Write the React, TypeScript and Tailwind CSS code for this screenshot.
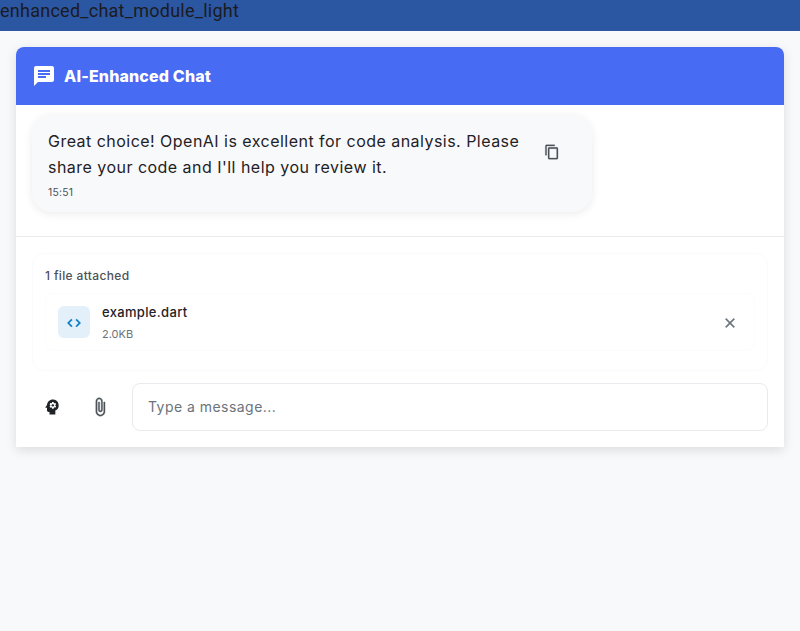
import { MdAttachFile, MdChat, MdClose, MdCode, MdContentCopy, MdPsychology } from "react-icons/md";

function Message() {
  return (
    <div className="mx-4 mt-[9px] flex h-[98px] w-[560px] items-start rounded-[20px] bg-[#f8f9fb] pl-4 shadow-[0_2px_8px_rgba(0,0,0,0.08)]">
      <div className="w-[488px] shrink-0 pt-[14px]">
        <p className="text-base leading-[26px] tracking-[0.47px] whitespace-nowrap text-[#1f2125]">
          Great choice! OpenAI is excellent for code analysis. Please
          <br />
          share your code and I'll help you review it.
        </p>
        <p className="mt-[5px] text-[10.4px] leading-4 tracking-[0.2px] text-[#4b5258]">15:51</p>
      </div>
      <MdContentCopy
        className="mt-[30px] ml-2 size-4 text-[#4b5258] [&>path:first-child]:stroke-none"
        stroke="currentColor"
        strokeWidth="0.4"
      />
    </div>
  );
}

function Attachments() {
  return (
    <div className="h-[118px] rounded-xl border border-[#fafafc] px-3 pt-3">
      <p className="text-xs leading-5 font-medium tracking-[0.35px] text-[#4b5258]">1 file attached</p>
      <div className="mt-[7px] flex h-[58px] items-center rounded-lg border border-[#fcfcfd] pr-4 pl-3">
        <div className="flex size-8 items-center justify-center rounded-md bg-[#e3f0f9] text-[#0077c8]">
          <MdCode className="mt-px size-4 [&>path:first-child]:stroke-none" stroke="currentColor" strokeWidth="0.6" />
        </div>
        <div className="ml-3 flex-1">
          <p className="text-[13px] leading-5 font-medium tracking-[0.33px] text-[#1f2125]">example.dart</p>
          <p className="mt-1 text-[11px] leading-4 text-[#6b737b]">2.0KB</p>
        </div>
        <MdClose
          className="mt-px size-4 text-[#6b737b] [&>path:first-child]:stroke-none"
          stroke="currentColor"
          strokeWidth="0.6"
        />
      </div>
    </div>
  );
}

export default function App() {
  return (
    <div className="min-h-screen bg-[#f8f9fb] font-['Inter',sans-serif]">
      <div className="h-[31px] bg-[#2a56a2] font-['Roboto',sans-serif] text-lg leading-[22px] tracking-[0.26px] text-[#1c1b1f]">
        enhanced_chat_module_light
      </div>
      <main className="mx-4 mt-4 h-[400px] rounded-t-lg bg-white shadow-[0_3px_12px_rgba(0,0,0,0.12)]">
        <header className="flex h-[58px] items-center gap-2 rounded-t-lg bg-[#476bf2] px-4 text-white">
          <MdChat className="size-6" />
          <h1 className="text-base font-extrabold tracking-[0.16px]">AI-Enhanced Chat</h1>
        </header>
        <Message />
        <div className="mt-6 border-t border-[#e9eaee] px-4 pt-4">
          <Attachments />
          <div className="mt-3 flex h-12 items-center">
            <button className="flex size-10 items-center justify-center text-[#1f2328]">
              <MdPsychology className="size-5" />
            </button>
            <button className="ml-2 flex size-10 items-center justify-center text-[#4b5258]">
              <MdAttachFile
                className="size-5 [&>path:first-child]:stroke-none"
                stroke="currentColor"
                strokeWidth="0.5"
              />
            </button>
            <input
              className="ml-3 h-12 flex-1 rounded-lg border border-[#e9eaee] px-[15px] pb-0.5 text-sm tracking-[0.46px] outline-none placeholder:text-[#6b737b]"
              placeholder="Type a message..."
            />
          </div>
        </div>
      </main>
    </div>
  );
}
